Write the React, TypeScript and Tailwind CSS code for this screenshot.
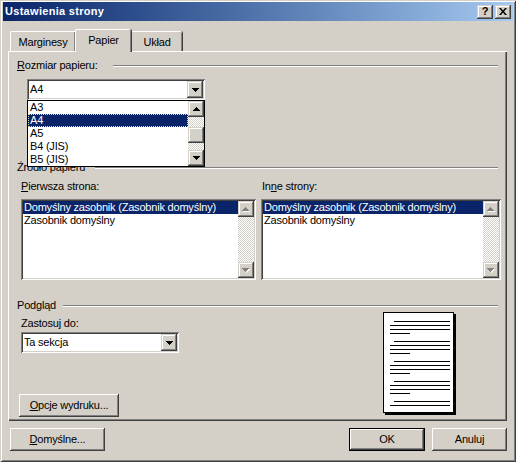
import React from "react";

const raised = "shadow-[inset_-1px_-1px_#404040,inset_1px_1px_#fff,inset_-2px_-2px_#808080]";
const scrollBtn =
  "shadow-[inset_-1px_-1px_#404040,inset_1px_1px_#d4d0c8,inset_-2px_-2px_#808080,inset_2px_2px_#fff]";
const sunken =
  "shadow-[inset_1px_1px_#808080,inset_-1px_-1px_#fff,inset_2px_2px_#404040,inset_-2px_-2px_#d4d0c8] p-[2px]";
const hatch = "bg-[image:repeating-conic-gradient(#d4d0c8_0_25%,#fff_0_50%)] bg-[length:2px_2px]";

function ArrowDown({ color = "#000" }: { color?: string }) {
  return (
    <svg width="7" height="4" viewBox="0 0 7 4" shapeRendering="crispEdges">
      <path d="M0 0h7v1h-1v1h-1v1h-1v1h-1v-1h-1v-1h-1v-1h-1z" fill={color} />
    </svg>
  );
}

function ArrowUp({ color = "#000" }: { color?: string }) {
  return (
    <svg width="7" height="4" viewBox="0 0 7 4" shapeRendering="crispEdges">
      <path d="M3 0h1v1h1v1h1v1h1v1h-7v-1h1v-1h1v-1h1z" fill={color} />
    </svg>
  );
}

function ScrollButton({ dir, disabled }: { dir: "up" | "down"; disabled?: boolean }) {
  const Arrow = dir === "up" ? ArrowUp : ArrowDown;
  return (
    <div className={`relative flex h-4 w-4 shrink-0 items-center justify-center bg-[#d4d0c8] ${scrollBtn}`}>
      {disabled ? (
        <>
          <span className="absolute left-[5px] top-[7px] flex">
            <Arrow color="#fff" />
          </span>
          <span className="absolute left-[4px] top-[6px] flex">
            <Arrow color="#808080" />
          </span>
        </>
      ) : (
        <Arrow />
      )}
    </div>
  );
}

function GroupHeader({ label, width }: { label: React.ReactNode; width: string }) {
  return (
    <div className="flex h-[13px] items-center">
      <span className={`${width} shrink-0 leading-[13px]`}>{label}</span>
      <div className="h-[2px] flex-1 border-t border-b border-t-[#808080] border-b-white" />
    </div>
  );
}

function Combo({ value, className }: { value: string; className: string }) {
  return (
    <div className={`flex h-[21px] bg-white ${sunken} ${className}`}>
      <div className="flex-1 pl-[1px] leading-[17px]">{value}</div>
      <div className={`flex h-[17px] w-4 items-center justify-center bg-[#d4d0c8] ${scrollBtn}`}>
        <ArrowDown />
      </div>
    </div>
  );
}

function TrayList({ className }: { className: string }) {
  return (
    <div className={`flex h-[81px] bg-white ${sunken} ${className}`}>
      <div className="flex-1 whitespace-nowrap">
        <div className="h-[13px] bg-[#0a246a] pl-[1px] leading-[13px] text-white">
          Domyślny zasobnik (Zasobnik domyślny)
        </div>
        <div className="h-[13px] pl-[1px] leading-[13px]">Zasobnik domyślny</div>
      </div>
      <div className="flex w-4 flex-col">
        <ScrollButton dir="up" disabled />
        <div className={`flex-1 ${hatch}`} />
        <ScrollButton dir="down" disabled />
      </div>
    </div>
  );
}

function PaperSizeDropdown() {
  const sizes = ["A3", "A4", "A5", "B4 (JIS)", "B5 (JIS)"];
  return (
    <div className="absolute left-0 top-[21px] z-10 flex h-[67px] w-[178px] border border-black bg-white">
      <div className="flex-1 whitespace-nowrap">
        {sizes.map((s) =>
          s === "A4" ? (
            <div key={s} className="h-[13px] border border-dotted border-[#f5db95] bg-[#0a246a] pl-[1px] leading-[11px] text-white">
              {s}
            </div>
          ) : (
            <div key={s} className="h-[13px] pl-[2px] leading-[13px]">
              {s}
            </div>
          )
        )}
      </div>
      <div className="flex w-4 flex-col">
        <ScrollButton dir="up" />
        <div className={`h-[10px] ${hatch}`} />
        <div className={`h-4 bg-[#d4d0c8] ${scrollBtn}`} />
        <div className={`flex-1 ${hatch}`} />
        <ScrollButton dir="down" />
      </div>
    </div>
  );
}

function PagePreview() {
  const groups = [4, 4, 4, 4, 2];
  return (
    <div className="mt-0 flex h-[101px] w-[71px] flex-col border border-black bg-white pl-[6px] pt-[8px] shadow-[2px_2px_0_#000]">
      {groups.map((count, g) => (
        <div key={g} className={`flex flex-col gap-[3px] ${g > 0 ? "mt-[7px]" : ""}`}>
          {Array.from({ length: count }).map((_, i) => {
            const w = i === 0 ? "ml-[4px] w-[56px]" : i === 3 ? "w-[20px]" : "w-[60px]";
            return <div key={i} className={`h-px bg-black ${w}`} />;
          })}
        </div>
      ))}
    </div>
  );
}

function PushButton({ children, className, isDefault }: { children: React.ReactNode; className: string; isDefault?: boolean }) {
  return (
    <div
      className={`flex h-[23px] items-center justify-center bg-[#d4d0c8] ${isDefault ? "border border-black" : ""} ${raised} ${className}`}
    >
      {children}
    </div>
  );
}

export default function App() {
  return (
    <div className="flex h-[462px] w-[516px] flex-col bg-[#d4d0c8] px-[3px] pt-[2px] font-['Liberation_Sans',Arial,sans-serif] text-[11px] tracking-[-0.2px] text-black shadow-[inset_1px_1px_#d4d0c8,inset_-1px_-1px_#404040,inset_2px_2px_#fff,inset_-2px_-2px_#808080]">
      {/* title bar */}
      <div className="flex h-[19px] items-center bg-linear-to-r from-[#0a246a] to-[#a6caf0] pl-[2px] pr-[2px]">
        <span className="flex-1 font-bold tracking-[0.3px] text-white">Ustawienia strony</span>
        <div className={`flex h-[14px] w-4 items-center justify-center bg-[#d4d0c8] text-[11px] font-bold leading-none ${scrollBtn}`}>
          ?
        </div>
        <div className={`ml-[2px] flex h-[14px] w-4 items-center justify-center bg-[#d4d0c8] ${scrollBtn}`}>
          <svg width="8" height="7" viewBox="0 0 8 7">
            <path d="M0 0h2l2 2.5L6 0h2L5 3.5 8 7H6L4 4.5 2 7H0l3-3.5z" fill="#000" />
          </svg>
        </div>
      </div>

      <div className="flex flex-1 flex-col px-[5px]">
        {/* tabs */}
        <div className="mt-[8px] flex h-[22px] items-end pl-[2px]">
          <div className="flex h-[20px] w-[65px] items-center justify-center rounded-tl-[2px] border-l border-t border-white pt-[2px] shadow-[inset_-1px_0_#808080,1px_0_#404040]">
            Marginesy
          </div>
          <div className="relative z-10 -mb-px flex h-[23px] w-[56px] items-center justify-center rounded-t-[2px] border-l border-t border-white bg-[#d4d0c8] pb-[2px] shadow-[inset_-1px_0_#808080,1px_0_#404040]">
            Papier
          </div>
          <div className="ml-px flex h-[20px] w-[50px] items-center justify-center rounded-tr-[2px] border-t border-white pt-[2px] shadow-[inset_-1px_0_#808080,1px_0_#404040]">
            Układ
          </div>
        </div>

        {/* tab panel */}
        <div className={`flex h-[370px] w-[499px] flex-col bg-[#d4d0c8] px-[9px] shadow-[inset_1px_1px_#fff,inset_-1px_-1px_#404040,inset_-2px_-2px_#808080]`}>
          <div className="mt-[8px]">
            <GroupHeader
              width="w-[96px]"
              label={
                <>
                  <span className="underline">R</span>ozmiar papieru:
                </>
              }
            />
          </div>
          <div className="relative ml-[10px] mt-[7px] w-[178px]">
            <Combo value="A4" className="w-[178px]" />
            <PaperSizeDropdown />
          </div>

          <div className="mt-[61px]">
            <GroupHeader width="w-[78px]" label="Źródło papieru" />
          </div>

          <div className="mt-[6px] flex">
            <div className="ml-[4px] flex w-[235px] flex-col">
              <div className="h-[13px] leading-[13px]">
                <span className="underline">P</span>ierwsza strona:
              </div>
              <TrayList className="mt-[6px] w-[235px]" />
            </div>
            <div className="ml-[5px] flex w-[240px] flex-col">
              <div className="h-[13px] pl-px leading-[13px]">
                In<span className="underline">n</span>e strony:
              </div>
              <TrayList className="mt-[6px] w-[240px]" />
            </div>
          </div>

          <div className="mt-[19px]">
            <GroupHeader width="w-[46px]" label="Podgląd" />
          </div>

          <div className="flex">
            <div className="flex w-[366px] flex-col">
              <div className="ml-[4px] mt-[5px] h-[13px] leading-[13px]">
                Zastosu<span className="underline">j</span> do:
              </div>
              <Combo value="Ta sekcja" className="ml-[4px] mt-[2px] w-[158px]" />
              <PushButton className="ml-[2px] mt-[41px] w-[100px]">
                <span>
                  <span className="underline">O</span>pcje wydruku...
                </span>
              </PushButton>
            </div>
            <PagePreview />
          </div>
        </div>

        {/* dialog buttons */}
        <div className="mt-[7px] flex">
          <PushButton className="ml-[2px] w-[95px]">
            <span>
              <span className="underline">D</span>omyślne...
            </span>
          </PushButton>
          <PushButton isDefault className="ml-auto w-[76px]">
            OK
          </PushButton>
          <PushButton className="ml-[7px] mr-px w-[75px]">Anuluj</PushButton>
        </div>
      </div>
    </div>
  );
}
